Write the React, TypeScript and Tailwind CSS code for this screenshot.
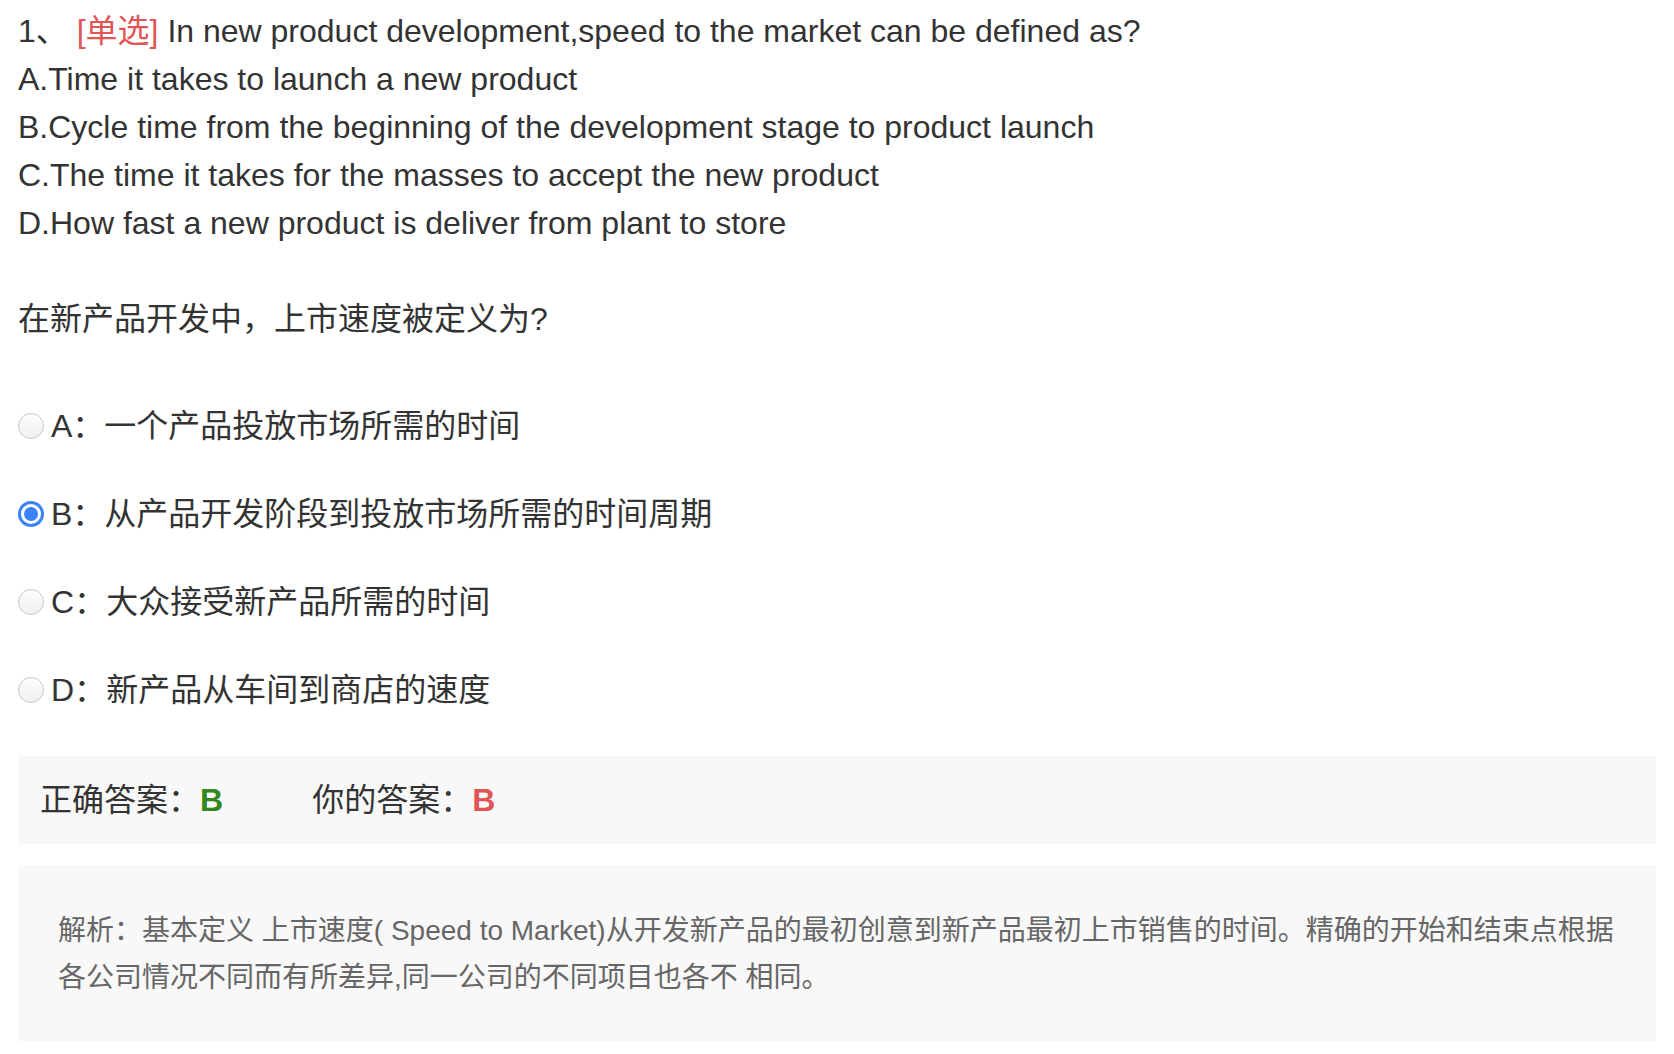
import React from "react";

const FONT = { fontFamily: '"Liberation Sans", "Noto Sans CJK SC", sans-serif' };

function Radio({ checked }: { checked?: boolean }) {
  if (checked) {
    return (
      <span className="flex h-[26px] w-[26px] shrink-0 items-center justify-center rounded-full bg-[#3b82f6]">
        <span className="flex h-[20px] w-[20px] items-center justify-center rounded-full bg-white">
          <span className="h-[14px] w-[14px] rounded-full bg-[#3b82f6]" />
        </span>
      </span>
    );
  }
  return (
    <span className="h-[26px] w-[26px] shrink-0 rounded-full border border-[#c9c9c9] bg-gradient-to-b from-[#fdfdfd] to-[#f1f1f1]" />
  );
}

const options = [
  { k: "A", t: "一个产品投放市场所需的时间", checked: false },
  { k: "B", t: "从产品开发阶段到投放市场所需的时间周期", checked: true },
  { k: "C", t: "大众接受新产品所需的时间", checked: false },
  { k: "D", t: "新产品从车间到商店的速度", checked: false },
];

export default function App() {
  return (
    <div className="min-h-screen bg-white" style={FONT}>
      <div className="px-[18px] pt-[7px] text-[32px] leading-[48px] text-[#333]">
        <div>
          1、 <span className="text-[#e05656]">[单选]</span> In new product development,speed to the market can be defined as?
        </div>
        <div>A.Time it takes to launch a new product</div>
        <div>B.Cycle time from the beginning of the development stage to product launch</div>
        <div>C.The time it takes for the masses to accept the new product</div>
        <div>D.How fast a new product is deliver from plant to store</div>
        <div className="mt-[48px]">在新产品开发中，上市速度被定义为?</div>

        <div className="mt-[39px]">
          {options.map((o) => (
            <div key={o.k} className="flex h-[88px] items-center gap-[7px]">
              <Radio checked={o.checked} />
              <span>
                {o.k}：{o.t}
              </span>
            </div>
          ))}
        </div>

        <div className="mt-[22px] flex h-[88px] items-center bg-[#f8f8f8] pl-[22px]">
          <span>正确答案：</span>
          <span className="font-bold text-[#34861f]">B</span>
          <span className="ml-[89px]">你的答案：</span>
          <span className="font-bold text-[#e05656]">B</span>
        </div>

        <div className="mt-[21px] bg-[#f8f8f8] px-[40px] pb-[40px] pt-[42px] text-[28px] leading-[47px] text-[#666]">
          解析：基本定义 上市速度( Speed to Market)从开发新产品的最初创意到新产品最初上市销售的时间。精确的开始和结束点根据
          <br />
          各公司情况不同而有所差异,同一公司的不同项目也各不 相同。
        </div>
      </div>
    </div>
  );
}
